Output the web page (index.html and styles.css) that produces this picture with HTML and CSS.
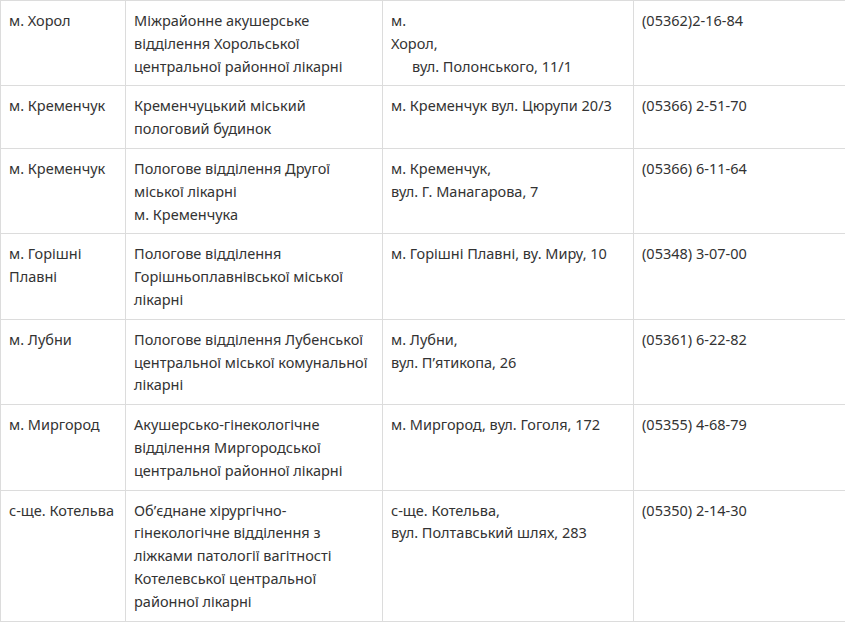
FILE: index.html
```html
<!DOCTYPE html>
<html lang="uk">
<head>
<meta charset="utf-8">
<link rel="stylesheet" href="styles.css">
</head>
<body>
<table class="maternity">
  <colgroup>
    <col class="c-city">
    <col class="c-name">
    <col class="c-addr">
    <col class="c-phone">
  </colgroup>
  <tbody>
    <tr>
      <td>м. Хорол</td>
      <td>Міжрайонне акушерське відділення Хорольської центральної районної лікарні</td>
      <td>м.<br>Хорол,<br><span class="indent">вул. Полонського, 11/1</span></td>
      <td>(05362)2-16-84</td>
    </tr>
    <tr>
      <td>м. Кременчук</td>
      <td>Кременчуцький міський пологовий будинок</td>
      <td>м. Кременчук вул. Цюрупи 20/3</td>
      <td>(05366) 2-51-70</td>
    </tr>
    <tr>
      <td>м. Кременчук</td>
      <td>Пологове відділення Другої міської лікарні<br>м. Кременчука</td>
      <td>м. Кременчук,<br>вул. Г. Манагарова, 7</td>
      <td>(05366) 6-11-64</td>
    </tr>
    <tr>
      <td>м. Горішні Плавні</td>
      <td>Пологове відділення Горішньоплавнівської міської лікарні</td>
      <td>м. Горішні Плавні, ву. Миру, 10</td>
      <td>(05348) 3-07-00</td>
    </tr>
    <tr>
      <td>м. Лубни</td>
      <td>Пологове відділення Лубенської центральної міської комунальної лікарні</td>
      <td>м. Лубни,<br>вул. П’ятикопа, 26</td>
      <td>(05361) 6-22-82</td>
    </tr>
    <tr>
      <td>м. Миргород</td>
      <td>Акушерсько-гінекологічне відділення Миргородської центральної районної лікарні</td>
      <td>м. Миргород, вул. Гоголя, 172</td>
      <td>(05355) 4-68-79</td>
    </tr>
    <tr>
      <td>с-ще. Котельва</td>
      <td>Об’єднане хірургічно-гінекологічне відділення з ліжками патології вагітності Котелевської центральної районної лікарні</td>
      <td>с-ще. Котельва,<br>вул. Полтавський шлях, 283</td>
      <td>(05350) 2-14-30</td>
    </tr>
  </tbody>
</table>
</body>
</html>
```

FILE: styles.css
```css
html, body {
  margin: 0;
  padding: 0;
  background: #fff;
  overflow: hidden;
}

.maternity {
  border-collapse: collapse;
  table-layout: fixed;
  width: 880px;
  font-family: "Noto Sans", "Open Sans", sans-serif;
  font-size: 14.5px;
  line-height: 22.8px;
  color: #333;
}

.c-city { width: 125px; }
.c-name { width: 257px; }
.c-addr { width: 251px; }
.c-phone { width: 247px; }

.maternity td {
  border: 1px solid #dcdcdc;
  padding: 8px;
  vertical-align: top;
  text-align: left;
}

.indent {
  padding-left: 21px;
}
```
